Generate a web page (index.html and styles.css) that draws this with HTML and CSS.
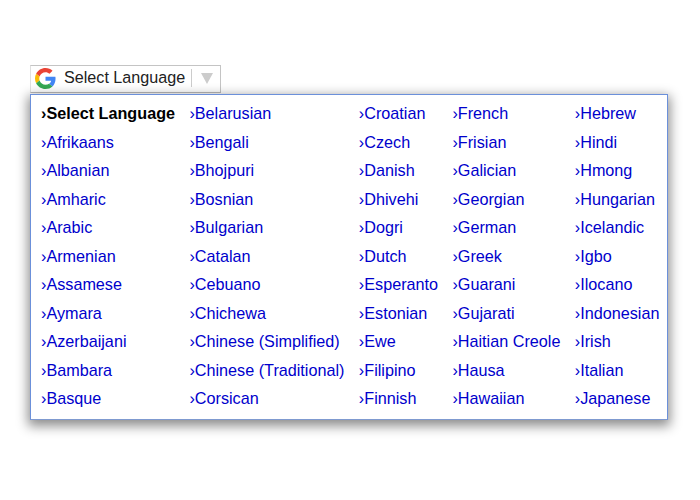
FILE: index.html
```html
<!DOCTYPE html>
<html lang="en">
<head>
<meta charset="utf-8">
<title>Select Language</title>
<link rel="stylesheet" href="styles.css">
</head>
<body>
<div class="gadget">
  <svg class="logo" viewBox="0 0 48 48" width="21" height="21" aria-hidden="true">
    <path fill="#EA4335" d="M24 9.5c3.54 0 6.71 1.22 9.21 3.6l6.85-6.85C35.9 2.38 30.47 0 24 0 14.62 0 6.51 5.38 2.56 13.22l7.98 6.19C12.43 13.72 17.74 9.5 24 9.5z"/>
    <path fill="#4285F4" d="M46.98 24.55c0-1.57-.15-3.09-.38-4.55H24v9.02h12.94c-.58 2.96-2.26 5.48-4.78 7.18l7.73 6c4.51-4.18 7.09-10.36 7.09-17.65z"/>
    <path fill="#FBBC05" d="M10.53 28.59c-.48-1.45-.76-2.99-.76-4.59s.27-3.14.76-4.59l-7.98-6.19C.92 16.46 0 20.12 0 24c0 3.88.92 7.54 2.56 10.78l7.97-6.19z"/>
    <path fill="#34A853" d="M24 48c6.48 0 11.93-2.13 15.89-5.81l-7.73-6c-2.15 1.45-4.92 2.3-8.16 2.3-6.26 0-11.57-4.22-13.47-9.91l-7.98 6.19C6.51 42.62 14.62 48 24 48z"/>
  </svg>
  <span class="gadget-label">Select Language</span>
  <span class="divider"></span>
  <span class="arrow"></span>
</div>
<div class="menu">
  <div class="col">
    <a class="item selected"><span class="chev">›</span>Select Language</a>
    <a class="item"><span class="chev">›</span>Afrikaans</a>
    <a class="item"><span class="chev">›</span>Albanian</a>
    <a class="item"><span class="chev">›</span>Amharic</a>
    <a class="item"><span class="chev">›</span>Arabic</a>
    <a class="item"><span class="chev">›</span>Armenian</a>
    <a class="item"><span class="chev">›</span>Assamese</a>
    <a class="item"><span class="chev">›</span>Aymara</a>
    <a class="item"><span class="chev">›</span>Azerbaijani</a>
    <a class="item"><span class="chev">›</span>Bambara</a>
    <a class="item"><span class="chev">›</span>Basque</a>
  </div>
  <div class="col">
    <a class="item"><span class="chev">›</span>Belarusian</a>
    <a class="item"><span class="chev">›</span>Bengali</a>
    <a class="item"><span class="chev">›</span>Bhojpuri</a>
    <a class="item"><span class="chev">›</span>Bosnian</a>
    <a class="item"><span class="chev">›</span>Bulgarian</a>
    <a class="item"><span class="chev">›</span>Catalan</a>
    <a class="item"><span class="chev">›</span>Cebuano</a>
    <a class="item"><span class="chev">›</span>Chichewa</a>
    <a class="item"><span class="chev">›</span>Chinese (Simplified)</a>
    <a class="item"><span class="chev">›</span>Chinese (Traditional)</a>
    <a class="item"><span class="chev">›</span>Corsican</a>
  </div>
  <div class="col">
    <a class="item"><span class="chev">›</span>Croatian</a>
    <a class="item"><span class="chev">›</span>Czech</a>
    <a class="item"><span class="chev">›</span>Danish</a>
    <a class="item"><span class="chev">›</span>Dhivehi</a>
    <a class="item"><span class="chev">›</span>Dogri</a>
    <a class="item"><span class="chev">›</span>Dutch</a>
    <a class="item"><span class="chev">›</span>Esperanto</a>
    <a class="item"><span class="chev">›</span>Estonian</a>
    <a class="item"><span class="chev">›</span>Ewe</a>
    <a class="item"><span class="chev">›</span>Filipino</a>
    <a class="item"><span class="chev">›</span>Finnish</a>
  </div>
  <div class="col">
    <a class="item"><span class="chev">›</span>French</a>
    <a class="item"><span class="chev">›</span>Frisian</a>
    <a class="item"><span class="chev">›</span>Galician</a>
    <a class="item"><span class="chev">›</span>Georgian</a>
    <a class="item"><span class="chev">›</span>German</a>
    <a class="item"><span class="chev">›</span>Greek</a>
    <a class="item"><span class="chev">›</span>Guarani</a>
    <a class="item"><span class="chev">›</span>Gujarati</a>
    <a class="item"><span class="chev">›</span>Haitian Creole</a>
    <a class="item"><span class="chev">›</span>Hausa</a>
    <a class="item"><span class="chev">›</span>Hawaiian</a>
  </div>
  <div class="col">
    <a class="item"><span class="chev">›</span>Hebrew</a>
    <a class="item"><span class="chev">›</span>Hindi</a>
    <a class="item"><span class="chev">›</span>Hmong</a>
    <a class="item"><span class="chev">›</span>Hungarian</a>
    <a class="item"><span class="chev">›</span>Icelandic</a>
    <a class="item"><span class="chev">›</span>Igbo</a>
    <a class="item"><span class="chev">›</span>Ilocano</a>
    <a class="item"><span class="chev">›</span>Indonesian</a>
    <a class="item"><span class="chev">›</span>Irish</a>
    <a class="item"><span class="chev">›</span>Italian</a>
    <a class="item"><span class="chev">›</span>Japanese</a>
  </div>
</div>
</body>
</html>
```
FILE: styles.css
```css
html, body {
  height: 100%;
}
body {
  box-sizing: border-box;
  margin: 0;
  padding: 65px 0 0 30px;
  font-family: "Liberation Sans", Arial, sans-serif;
  font-size: 16px;
  background: #fff;
}
.gadget {
  box-sizing: border-box;
  display: flex;
  align-items: center;
  width: 191px;
  height: 28px;
  padding-left: 4px;
  background: #fff;
  border: 1px solid;
  border-color: #c4c4c4 #c4c4c4 #b9b9b9 #e0e0e0;
  color: #222;
}
.logo {
  flex: none;
  margin-right: 8px;
  margin-top: -1px;
}
.gadget-label {
  margin-bottom: 3px;
  font-size: 16.15px;
  white-space: nowrap;
}
.divider {
  flex: none;
  width: 1px;
  height: 18px;
  margin-left: 6px;
  margin-bottom: 2px;
  background: #ccc;
}
.arrow {
  flex: none;
  width: 0;
  height: 0;
  margin-left: 9px;
  margin-bottom: 2px;
  border-style: solid;
  border-width: 11px 6px 0;
  border-color: #ccc transparent transparent;
}
.menu {
  box-sizing: border-box;
  position: relative;
  display: flex;
  gap: 14.4px;
  width: 638px;
  height: 326px;
  margin-top: 1px;
  padding: 4px 8px 6px 10px;
  background: #fff;
  border: 1px solid;
  border-color: #6b90da #6b90da #7f9ad0 #6b90da;
  box-shadow: 0 4px 11px 2px rgba(0, 0, 0, 0.45);
}
.col {
  display: flex;
  flex-direction: column;
}
.item {
  display: block;
  height: 28.5px;
  line-height: 28.5px;
  font-size: 16.2px;
  color: #0000cc;
  white-space: nowrap;
}
.selected {
  color: #000;
  font-weight: bold;
}
```
